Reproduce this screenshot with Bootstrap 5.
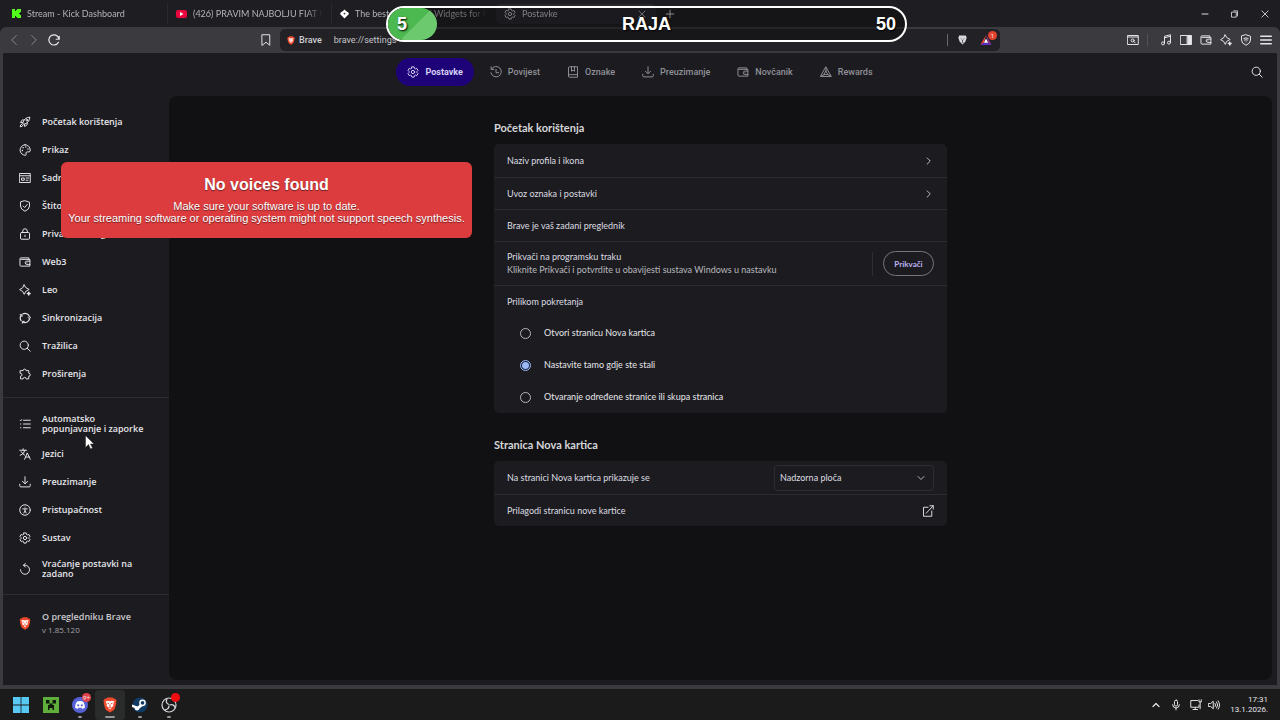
<!DOCTYPE html>
<html lang="hr" data-bs-theme="dark">
<head>
<meta charset="utf-8">
<meta name="viewport" content="width=device-width, initial-scale=1">
<title>Postavke</title>
<link href="https://cdn.jsdelivr.net/npm/bootstrap@5.3.0/dist/css/bootstrap.min.css" rel="stylesheet">
<style>
:root{--edge:#3a3a3f;--page:#1c1c20;--panel:#111113;--line:#2e2e34}
body{font-family:Lato,"Noto Sans",sans-serif;font-size:9px;line-height:12px;color:#e6e6ea;background:#1c1c1c;overflow:hidden}
a,a:hover{color:inherit;text-decoration:none}
button{color:inherit}
.ico{width:12px;height:12px;flex:none;fill:none;stroke:currentColor;stroke-width:1.3;stroke-linecap:round;stroke-linejoin:round}
.arrow{width:10px;height:10px}
.iconbtn{width:20px;height:20px;padding:0;border:0;background:none;display:flex;align-items:center;justify-content:center;flex:none}
.iconbtn.faded{color:#88888d}
/* tab strip */
.tabstrip{height:27px;background:#1e1e22;flex:none}
.tabitem{width:164px;height:20px;padding:0 9px 0 8px;gap:6px;color:#b4b4b9;overflow:hidden;white-space:nowrap;border-right:1px solid #29292e}
.tabitem.current{background:#29292d;border:0;border-radius:5px;color:#d0d0d4;width:160px}
.tabtext{flex:1;overflow:hidden;-webkit-mask-image:linear-gradient(90deg,#000 88%,transparent);mask-image:linear-gradient(90deg,#000 88%,transparent)}
.winbtn{width:30px;height:26px}
/* toolbar */
.toolbar{height:26px;background:var(--edge);border-radius:6px 6px 0 0;flex:none}
.toolside{width:280px;flex:none}
.address{height:22px;background:#222226;border-radius:5px;min-width:0;padding-left:7px;font-family:Roboto,sans-serif}
.address input{background:none;border:0;outline:0;color:#c4c4ca;font-size:9px;padding:0;min-width:0}
.address .site{font-size:9px;font-weight:500;color:#d0d0d5;margin-right:12px}
.vbar{width:1px;height:12px;background:#6a6a70}
.count{top:1px;left:8px;width:9px;height:9px;background:#e2432d;border-radius:50%;font-size:6px;line-height:9px;text-align:center}
/* page */
.page{background:var(--page);border:solid var(--edge);border-width:0 3px 4px;min-height:0}
.topnav{height:43px;flex:none;padding:0 10px 5px;font-family:Roboto,sans-serif}
.topnav .ends{flex:1}
.pills{gap:5px}
.pill{height:28px;padding:0 11px;gap:6px;border-radius:14px;font-weight:500;color:#8f8f96}
.pill.current{background:#1e0378;color:#d5d0f5;font-weight:700}
.sidebar{width:166px;flex:none;padding-top:12px;font-family:"Open Sans","Noto Sans",sans-serif;font-weight:600}
.sideitem{height:28px;padding:0 16px;gap:11px}
.sideitem.tall{height:33px;line-height:10px}
.rule{border-top:1px solid var(--line);margin:9px 0}
.about{padding:6px 16px;gap:11px;line-height:13px;color:#c8c8cc}
.about small{font-size:8px;font-weight:400;color:#a2a2a8}
.panel{background:var(--panel);border-radius:8px;margin:0 5px 5px 0;padding-top:24px;min-width:0}
.column{max-width:453px;margin:0 auto}
.column h2{font-size:11px;line-height:16px;font-weight:700;color:#d6d6da;margin:0 0 8px}
.group{background:var(--page);border-radius:5px;margin-bottom:24px}
.line{height:32px;padding:0 13px;color:#dcdce0}
.line + .line{border-top:1px solid #2b2b30}
.line.first{height:33px}
.line.tall{height:44px}
.choice{height:32px;padding:0 0 0 26px;gap:13px;margin:0}
.choice input{width:11px;height:11px;margin:0;appearance:none;border:1px solid #b4b4ba;border-radius:50%;flex:none}
.choice input:checked{border:1px solid #9cb8f5;background:radial-gradient(circle,#9cb8f5 0 3px,#182444 4px)}
.pin{height:25px;width:51px;padding:0;border:1px solid #77757f;border-radius:13px;background:none;font-size:8px;font-weight:700;color:#bcb2f0}
.pinwrap{border-left:1px solid #2e2e33;height:24px;padding-left:10px}
.hint{color:#b8b8be;line-height:14px}
.pick{width:160px;height:26px;padding:0 20px 0 5px;border:1px solid #2d2d32;border-radius:4px;color:#dcdce0;font-size:9px;line-height:12px;background-color:transparent;background-position:right 8px center;background-size:8px;box-shadow:none}
/* taskbar */
.taskbar{height:31px;flex:none;background:#1b1b1b;font-size:8px}
.apps{width:178px;margin-left:6px}
.app{flex:1;height:30px;padding:0;border:0;border-radius:4px;background:none;position:relative;display:flex;align-items:center;justify-content:center}
.app.current{background:#2a2b2b}
.app svg{width:16px;height:16px}
.app.open::after{content:"";position:absolute;left:50%;bottom:2px;width:4px;height:2px;margin-left:-2px;border-radius:1px;background:#96969a}
.app.current::after{width:10px;margin-left:-5px}
.ping{top:3px;right:4px;width:9px;height:9px;border-radius:50%;background:#e0424b;font-size:6px;line-height:9px}
.ping.rec{background:#f00d12}
.clock{line-height:10px;font-family:Roboto,sans-serif}
/* stream overlays */
.goal{left:386px;top:6px;width:521px;height:36px;border:2px solid #fff;border-radius:18px;background:rgba(8,8,10,.4);font:700 18px/32px "Liberation Sans",Arial,sans-serif;color:#fff;text-shadow:1px 1px 2px #000;overflow:hidden}
.goalfill{inset:0 auto 0 0;background:linear-gradient(135deg,#4cb950 55%,#6cc96e 55%);border-radius:0 16px 16px 0}
.goal .cap{padding:0 9px}
.notice{left:61px;top:162px;width:411px;height:76px;border-radius:6px;background:#dc3c3e;color:#fff;text-align:center;font:11px/12px "Liberation Sans",Arial,sans-serif;padding-top:13px;text-shadow:0 1px 1px rgba(0,0,0,.5);white-space:nowrap}
.notice h1{font-size:16px;line-height:20px;font-weight:700;margin:0 0 5px}
.pointer{left:85px;top:435px;width:9px;height:15px}
</style>
</head>
<body class="vh-100 d-flex flex-column">
<svg class="d-none">
<symbol id="gear" viewBox="0 0 16 16"><path d="M6.500 1.200h3l.5 2 1.200.7 2-.6 1.500 2.600-1.400 1.400v1.400l1.400 1.400-1.500 2.600-2-.6-1.200.7-.5 2h-3l-.5-2-1.200-.7-2 .6-1.500-2.600 1.400-1.400V7.300L1.300 5.900 2.800 3.300l2 .6L6 3.200z"/><circle cx="8" cy="8" r="2.200"/></symbol>
<symbol id="wallet" viewBox="0 0 16 16"><path d="M13 4.500V2.500H2.500a1.200 1.200 0 0 0-1.200 1.200v8.600c0 .7.5 1.200 1.200 1.200h12v-9h-12M14.500 6.800h-4a2.200 2.200 0 0 0 0 4.400h4M10.500 9h.1"/></symbol>
<symbol id="down" viewBox="0 0 16 16"><path d="M8 1v9M4.500 7 8 10.500 11.500 7M1 11v2q0 1.500 1.500 1.500h11Q15 14.500 15 13v-2"/></symbol>
<symbol id="search" viewBox="0 0 16 16"><circle cx="7" cy="7" r="5.500"/><path d="m11 11 4 4"/></symbol>
<symbol id="spark" viewBox="0 0 16 16"><path d="M7 1.200 9 4.800 13.500 7.300 9 9.800 7 13.800 4.800 9.800 .8 7.500 4.800 5z"/><path d="M13 11v3.500M11.200 12.800h3.600" stroke-width="2"/></symbol>
<symbol id="shield" viewBox="0 0 16 16"><path d="M8 1 14 3v5q0 4.500-6 7-6-2.500-6-7V3zM5.500 8l2 2 3.500-4"/></symbol>
<symbol id="chev" viewBox="0 0 16 16"><path d="m5 3 5 5-5 5"/></symbol>
<symbol id="x" viewBox="0 0 16 16"><path d="m3 3 10 10M13 3 3 13"/></symbol>
<symbol id="lion" viewBox="0 0 16 18"><path d="M5 .5h6l1.500 1.600 1.500-.2 1.500 2.300-.7 2 .3 1-1.800 6q-.4 1.300-1.600 2L8 17.500l-3.700-2.300q-1.200-.7-1.600-2L.9 7.200l.3-1-.7-2L2 1.900l1.500.2z" fill="#ef4a2c"/><path d="m3 5 2.500-.7L8 4.800l2.500-.5L13 5l-1.500 3.500.4 1.500-2.500 1.800L9.500 13 8 14.200 6.500 13l.1-1.200L4.100 10l.4-1.500z" fill="#fff"/><path d="m4.500 6.300 2.500.6-.7 1.500zm7 0L9 6.900l.7 1.500zM8 7.500l.9 3L8 11l-.9-.5zM6.600 12 8 11.300l1.400.7L8 13z" fill="#e0402a"/></symbol>
<symbol id="tri" viewBox="0 0 16 16"><path d="M8 1.500 15 14H1zM8 7l2.500 4.500h-5zM8 2v5M1.500 13.500l4-2M14.500 13.500l-4-2"/></symbol>
</svg>

<header class="tabstrip d-flex align-items-center ps-1">
  <a href="#" class="tabitem d-flex align-items-center"><svg class="flex-shrink-0" width="9" height="9" viewBox="0 0 9 9"><path d="M0 0h3v2h1V1h1V0h4v3H8v1H7v1h1v1h1v3H5V8H4V7H3v2H0z" fill="#53fc18"/></svg><span class="tabtext">Stream - Kick Dashboard</span></a>
  <a href="#" class="tabitem d-flex align-items-center"><svg class="flex-shrink-0" width="11" height="8" viewBox="0 0 11 8"><rect width="11" height="8" rx="2" fill="#e8063c"/><path d="m4 2 3.500 2L4 6z" fill="#fff"/></svg><span class="tabtext">(426) PRAVIM NAJBOLJU FIAT MULTIPLU</span></a>
  <a href="#" class="tabitem d-flex align-items-center border-0"><svg class="flex-shrink-0" width="9" height="10" viewBox="0 0 10 10"><path d="M5 0 7 2l2 1 1 2-2 2-3 3-3-3-2-2 1-2 2-1z" fill="#fff"/><circle cx="5" cy="4.500" r="1" fill="#333"/></svg><span class="tabtext">The best Goal Bar / Widgets for Kick</span></a>
  <a href="#" class="tabitem current d-flex align-items-center"><svg class="ico"><use href="#gear"/></svg><span class="tabtext">Postavke</span><svg class="ico arrow"><use href="#x"/></svg></a>
  <button class="iconbtn ms-1" aria-label="Nova kartica"><svg class="ico" viewBox="0 0 16 16"><path d="M8 3v10M3 8h10"/></svg></button>
  <div class="ms-auto d-flex">
    <button class="iconbtn winbtn" aria-label="Smanji"><svg class="ico" viewBox="0 0 16 16"><path d="M4 8h8"/></svg></button>
    <button class="iconbtn winbtn" aria-label="Vrati"><svg class="ico arrow" viewBox="0 0 16 16"><path d="M3 5h7v8H3zM6 3h6v8"/></svg></button>
    <button class="iconbtn winbtn" aria-label="Zatvori"><svg class="ico arrow"><use href="#x"/></svg></button>
  </div>
</header>

<div class="toolbar d-flex align-items-center">
  <div class="toolside d-flex align-items-center ps-1">
    <button class="iconbtn faded" aria-label="Natrag"><svg class="ico" viewBox="0 0 16 16"><path d="M11 2 5 8l6 6"/></svg></button>
    <button class="iconbtn faded" aria-label="Naprijed"><svg class="ico" viewBox="0 0 16 16"><path d="m5 2 6 6-6 6"/></svg></button>
    <button class="iconbtn" aria-label="Osvježi"><svg class="ico" viewBox="0 0 16 16"><path d="M14 11A6.800 6.800 0 1 1 14.500 6M15 3v4h-4" stroke-width="1.600"/></svg></button>
    <button class="iconbtn ms-auto me-1" aria-label="Oznaka"><svg class="ico" viewBox="0 0 16 16"><path d="M3 1h10v14l-5-4-5 4z"/></svg></button>
  </div>
  <div class="address flex-fill d-flex align-items-center pe-1">
    <svg class="flex-shrink-0 me-1" width="8" height="9" viewBox="0 0 16 18"><use href="#lion"/></svg>
    <span class="site">Brave</span>
    <input class="flex-fill" aria-label="Adresa" value="brave://settings">
    <span class="vbar me-1"></span>
    <button class="iconbtn" aria-label="Štitovi"><svg width="9" height="10" viewBox="0 0 16 18"><path d="M2 1h12l1.500 4L13 12l-5 5-5-5L.5 5z" fill="#d9d9dd"/><path d="M4 6l3 1-1 1zm8 0L9 7l1 1zM8 8l1 3-1 1-1-1zM6 13l2-1 2 1-2 1z" fill="#222226"/></svg></button>
    <button class="iconbtn position-relative ms-1" aria-label="Nagrade"><svg width="12" height="10" viewBox="0 0 16 14"><path d="M8 0 0 14l5-3z" fill="#f0443a"/><path d="m8 0 8 14-5-3z" fill="#9c2d8c"/><path d="M0 14h16l-5-3H5z" fill="#5b2fc4"/><path d="M8 5l3 6H5z" fill="#fff"/></svg><span class="count position-absolute ms-1">1</span></button>
  </div>
  <div class="toolside d-flex align-items-center justify-content-end pe-1">
    <button class="iconbtn" aria-label="Pretraži kartice"><svg class="ico" viewBox="0 0 16 16"><path d="M1 2h14v12H1zM1 4h14"/><circle cx="7.500" cy="8.500" r="2"/><path d="m9 10 2 2"/></svg></button>
    <span class="vbar ms-1 me-2 opacity-50"></span>
    <button class="iconbtn" aria-label="Glazba"><svg class="ico" viewBox="0 0 16 16"><path d="M6 12V3l8-2v10M6 5l8-2"/><circle cx="4" cy="12.500" r="2"/><circle cx="12" cy="11.500" r="2"/></svg></button>
    <button class="iconbtn" aria-label="Bočna traka"><svg class="ico" viewBox="0 0 16 16"><path d="M1 2h14v12H1z"/><path d="M10 2h5v12h-5z" fill="currentColor"/></svg></button>
    <button class="iconbtn" aria-label="Novčanik"><svg class="ico"><use href="#wallet"/></svg></button>
    <button class="iconbtn" aria-label="Leo"><svg class="ico"><use href="#spark"/></svg></button>
    <button class="iconbtn" aria-label="VPN"><svg class="ico" viewBox="0 0 16 16"><path d="M8 1 14 3v5q0 4.500-6 7-6-2.500-6-7V3zM5 6q3-2 6 0M6 8q2-1 4 0M8 10.500v.1"/></svg></button>
    <button class="iconbtn" aria-label="Izbornik"><svg class="ico" viewBox="0 0 16 16"><path d="M1 3h14M1 8h14M1 13h14" stroke-width="2"/></svg></button>
  </div>
</div>

<div class="page flex-fill d-flex flex-column">
  <nav class="topnav d-flex align-items-center">
    <div class="ends"></div>
    <div class="pills d-flex">
      <a href="#" class="pill current d-flex align-items-center"><svg class="ico"><use href="#gear"/></svg>Postavke</a>
      <a href="#" class="pill d-flex align-items-center"><svg class="ico" viewBox="0 0 16 16"><path d="M2 4a7 7 0 1 1-.8 5M1.500 1v3.500H5M8 4.500V9h3.500"/></svg>Povijest</a>
      <a href="#" class="pill d-flex align-items-center"><svg class="ico" viewBox="0 0 16 16"><path d="M14 11.500V1H3.500Q2 1 2 2.500v11Q2 15 3.500 15H14v-3.500H3.500Q2 11.500 2 13M6 1v6l2-1.500L10 7V1"/></svg>Oznake</a>
      <a href="#" class="pill d-flex align-items-center"><svg class="ico"><use href="#down"/></svg>Preuzimanje</a>
      <a href="#" class="pill d-flex align-items-center"><svg class="ico"><use href="#wallet"/></svg>Novčanik</a>
      <a href="#" class="pill d-flex align-items-center"><svg class="ico"><use href="#tri"/></svg>Rewards</a>
    </div>
    <div class="ends d-flex justify-content-end"><button class="iconbtn" aria-label="Pretraži postavke"><svg class="ico"><use href="#search"/></svg></button></div>
  </nav>
  <div class="d-flex flex-fill overflow-hidden">
    <aside class="sidebar">
      <a href="#" class="sideitem d-flex align-items-center"><svg class="ico" viewBox="0 0 16 16"><path d="M5 9Q7 2 14.500 1.500 14 9 7 11zM5 9 2 8.500 4.500 5l2 .5M7 11l.5 3L11 11.500V9M4 10.500Q1.500 11 1.500 14.500 5 14.500 5.500 12"/><circle cx="10.500" cy="5.500" r="1.200"/></svg>Početak korištenja</a>
      <a href="#" class="sideitem d-flex align-items-center"><svg class="ico" viewBox="0 0 16 16"><path d="M8 1a7 7 0 1 0 1 14q1-.5.3-2-.8-2.500 2-2.500H14q1-1 1-2.500A7 7 0 0 0 8 1z"/><path d="M4.500 8.500v.1M5.500 5v.1M9 4v.1M12 6.500v.1" stroke-width="2"/></svg>Prikaz</a>
      <a href="#" class="sideitem d-flex align-items-center"><svg class="ico" viewBox="0 0 16 16"><path d="M1 2h14v12H1zM1 5h14M4 8h3v3H4zM9.500 8H13M9.500 11H12"/></svg>Sadržaj</a>
      <a href="#" class="sideitem d-flex align-items-center"><svg class="ico"><use href="#shield"/></svg>Štitovi</a>
      <a href="#" class="sideitem d-flex align-items-center"><svg class="ico" viewBox="0 0 16 16"><path d="M3.500 6h9q1.500 0 1.500 1.500v6q0 1.500-1.500 1.500h-9Q2 15 2 13.500v-6Q2 6 3.500 6zM5 6V4a3 3 0 0 1 6 0v2M8 9.500v2"/></svg>Privatnost i sig.</a>
      <a href="#" class="sideitem d-flex align-items-center"><svg class="ico"><use href="#wallet"/></svg>Web3</a>
      <a href="#" class="sideitem d-flex align-items-center"><svg class="ico"><use href="#spark"/></svg>Leo</a>
      <a href="#" class="sideitem d-flex align-items-center"><svg class="ico" viewBox="0 0 16 16"><path d="M2.800 11.500a6.300 6.300 0 0 1 0-7M5 2.600a6.300 6.300 0 0 1 9 3.900M14 9.500a6.300 6.300 0 0 1-9 3.900" stroke-width="1.600"/><path d="M1.500 3.500h2.500v2.500M15.500 7 14 9l-2-1.500M4.500 15v-2.500h2.500"/></svg>Sinkronizacija</a>
      <a href="#" class="sideitem d-flex align-items-center"><svg class="ico"><use href="#search"/></svg>Tražilica</a>
      <a href="#" class="sideitem d-flex align-items-center"><svg class="ico" viewBox="0 0 16 16"><path d="M2 3.500h3.500a2 2 0 1 1 4 0H13V7a2 2 0 1 1 0 4v3.500H9.500a2 2 0 0 0-4 0H2V11a2 2 0 0 0 0-4z"/></svg>Proširenja</a>
      <div class="rule"></div>
      <a href="#" class="sideitem tall d-flex align-items-center"><svg class="ico" viewBox="0 0 16 16"><path d="M6 3h9M6 8h9M6 13h9M1.500 3l.8.8L3.500 2.200M2 8h.5M2 13h.5"/></svg><span>Automatsko<br>popunjavanje i zaporke</span></a>
      <a href="#" class="sideitem d-flex align-items-center"><svg class="ico" viewBox="0 0 16 16"><path d="M1 3h9M5.500 1v2M8 3Q7 8 1.500 10M3 5q1.500 3 4.500 4.500M7.500 15l3.500-8.500L15 15M9 12h5"/></svg>Jezici</a>
      <a href="#" class="sideitem d-flex align-items-center"><svg class="ico"><use href="#down"/></svg>Preuzimanje</a>
      <a href="#" class="sideitem d-flex align-items-center"><svg class="ico" viewBox="0 0 16 16"><circle cx="8" cy="8" r="7"/><path d="M8 4v.1M5 6.500h6M8 6.500v2.500M6.500 12 8 9l1.500 3"/></svg>Pristupačnost</a>
      <a href="#" class="sideitem d-flex align-items-center"><svg class="ico"><use href="#gear"/></svg>Sustav</a>
      <a href="#" class="sideitem tall d-flex align-items-center"><svg class="ico" viewBox="0 0 16 16"><path d="M2 9a6 6 0 1 0 6-6H6M8.500.5 6 3l2.500 2.500"/></svg><span>Vraćanje postavki na<br>zadano</span></a>
      <div class="rule"></div>
      <a href="#" class="about d-flex align-items-center"><svg class="flex-shrink-0" width="12" height="13" viewBox="0 0 16 18"><use href="#lion"/></svg><span>O pregledniku Brave<small class="d-block">v 1.85.120</small></span></a>
    </aside>
    <main class="panel flex-fill">
      <div class="column">
        <h2>Početak korištenja</h2>
        <section class="group">
          <a href="#" class="line first d-flex align-items-center justify-content-between">Naziv profila i ikona<svg class="ico arrow"><use href="#chev"/></svg></a>
          <a href="#" class="line d-flex align-items-center justify-content-between">Uvoz oznaka i postavki<svg class="ico arrow"><use href="#chev"/></svg></a>
          <div class="line d-flex align-items-center">Brave je vaš zadani preglednik</div>
          <div class="line tall d-flex align-items-center justify-content-between"><div>Prikvači na programsku traku<div class="hint">Kliknite Prikvači i potvrdite u obavijesti sustava Windows u nastavku</div></div>
            <div class="pinwrap d-flex align-items-center"><button class="pin">Prikvači</button></div></div>
          <div class="line d-flex align-items-center">Prilikom pokretanja</div>
          <label class="choice d-flex align-items-center"><input type="radio" name="start">Otvori stranicu Nova kartica</label>
          <label class="choice d-flex align-items-center"><input type="radio" name="start" checked>Nastavite tamo gdje ste stali</label>
          <label class="choice d-flex align-items-center"><input type="radio" name="start">Otvaranje određene stranice ili skupa stranica</label>
        </section>
        <h2>Stranica Nova kartica</h2>
        <section class="group">
          <div class="line first d-flex align-items-center justify-content-between"><label for="ntp">Na stranici Nova kartica prikazuje se</label><select id="ntp" class="form-select pick"><option>Nadzorna ploča</option></select></div>
          <a href="#" class="line d-flex align-items-center justify-content-between">Prilagodi stranicu nove kartice<svg class="ico" viewBox="0 0 16 16"><path d="M8 3H2v12h11V8M5.500 11 15 1M10.500 1H15v4.500"/></svg></a>
        </section>
      </div>
    </main>
  </div>
</div>

<footer class="taskbar d-flex align-items-center">
  <div class="apps d-flex">
    <button class="app" aria-label="Start"><svg viewBox="0 0 16 16"><path d="M0 0h7.600v7.600H0zM8.400 0H16v7.600H8.400zM0 8.400h7.600V16H0zM8.400 8.400H16V16H8.400z" fill="#58c8f4"/></svg></button>
    <button class="app" aria-label="Minecraft"><svg viewBox="0 0 16 16"><path d="M0 0h16v16H0z" fill="#5fae3c"/><path d="M3 3h3.500v3.500H3zM9.500 3H13v3.500H9.500zM6.500 6.500h3V8H11v5H9.500v-2h-3v2H5V8h1.500z" fill="#101a0c"/></svg></button>
    <button class="app open" aria-label="Discord"><svg viewBox="0 0 16 16"><circle cx="8" cy="8" r="8" fill="#5661d8"/><path d="M5 4.500q3-1 6 0 2 2.500 2 6-1.500 1.300-3 1.300l-.6-1H6.600l-.6 1q-1.500 0-3-1.300 0-3.500 2-6z" fill="#fff"/><circle cx="6.200" cy="8.300" r="1.100" fill="#5661d8"/><circle cx="9.800" cy="8.300" r="1.100" fill="#5661d8"/></svg><span class="ping position-absolute">9+</span></button>
    <button class="app open current" aria-label="Brave"><svg viewBox="0 0 16 18"><use href="#lion"/></svg></button>
    <button class="app open" aria-label="Steam"><svg viewBox="0 0 16 16"><circle cx="8" cy="8" r="7.500" fill="#123b63"/><circle cx="10.500" cy="5.800" r="2.600" fill="none" stroke="#fff" stroke-width="1.500"/><path d="m0 7.500 5.500 2L8.500 7l2 2-3 2.500q-.5 2-2.500 2T2.500 11L0 10z" fill="#fff"/></svg></button>
    <button class="app open" aria-label="OBS"><svg viewBox="0 0 16 16"><circle cx="8" cy="8" r="7" fill="#1b1b1e" stroke="#d5d5d8" stroke-width="1.200"/><path d="M8 7.500Q4 6 6 2M8.500 8q4-1.500 5.500 2.500M8 8.500q0 4-4.500 4.500" fill="none" stroke="#d5d5d8" stroke-width="1.300"/></svg><span class="ping rec position-absolute"></span></button>
  </div>
  <div class="ms-auto d-flex align-items-center pe-2">
    <button class="iconbtn" aria-label="Skrivene ikone"><svg class="ico" viewBox="0 0 16 16"><path d="m4 10 4-4 4 4" stroke-width="1.600"/></svg></button>
    <button class="iconbtn" aria-label="Mikrofon"><svg class="ico" viewBox="0 0 16 16"><rect x="6" y="1.500" width="4" height="8" rx="2"/><path d="M3.500 7.500a4.500 4.500 0 0 0 9 0M8 12v2.500"/></svg></button>
    <button class="iconbtn" aria-label="Mreža"><svg class="ico" viewBox="0 0 16 16"><path d="M10 2H1v9h11V8M4 14h6M7 11v3M12 1v3h3V1M13.500 4v9"/></svg></button>
    <button class="iconbtn" style="width:16px" aria-label="Zvuk"><svg class="ico" viewBox="0 0 16 16"><path d="M1 6h2.500L7 3v10l-3.500-3H1zM9.500 6q1.500 2 0 4M11.500 4q3 4 0 8M13.500 2.500q4 5.500 0 11"/></svg></button>
  </div>
  <div class="clock text-end me-2 pe-1"><div>17:31</div><div>13.1.2026.</div></div>
</footer>

<div class="goal position-absolute">
  <div class="goalfill position-absolute" style="width:9.400%"></div>
  <div class="cap position-relative d-flex"><span class="col">5</span><span class="col text-center">RAJA</span><span class="col text-end">50</span></div>
</div>
<div class="notice position-absolute" role="alert"><h1>No voices found</h1>Make sure your software is up to date.<br>Your streaming software or operating system might not support speech synthesis.</div>
<svg class="pointer position-absolute" viewBox="0 0 9 15"><path d="M.5.5v12l3-3 2 4.500 2-1-2-4h3.500z" fill="#fff" stroke="#222" stroke-width=".5"/></svg>
<script src="https://cdn.jsdelivr.net/npm/bootstrap@5.3.0/dist/js/bootstrap.bundle.min.js"></script>
</body>
</html>
